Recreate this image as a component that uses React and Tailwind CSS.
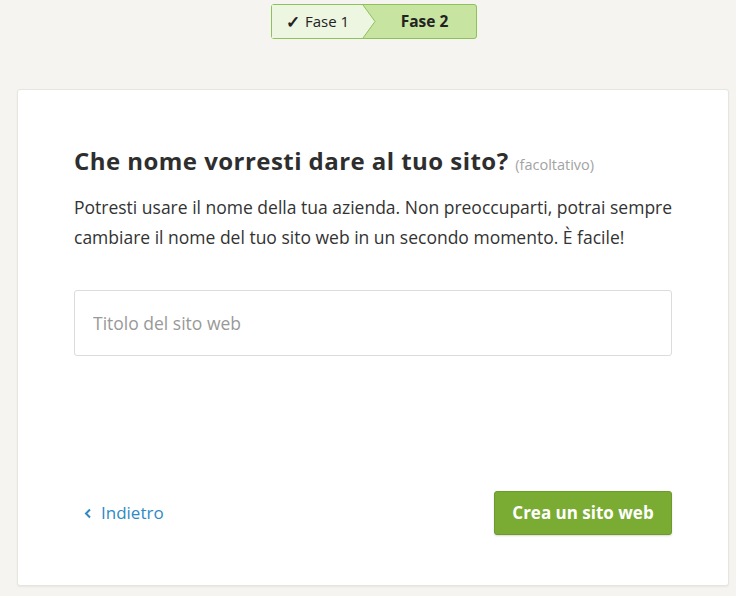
import React, { useState } from "react";

function Stepper() {
  return (
    <div className="relative flex h-[35px] w-[206px] rounded-[3px] border border-[#8dc159] bg-[#c8e4a1] text-[15px] text-[#222]">
      {/* Fase 1 segment with chevron */}
      <svg
        className="absolute left-0 top-0 h-[33px] w-[104px]"
        viewBox="0 0 104 33"
        preserveAspectRatio="none"
      >
        <path d="M0 0 H91 L103 16.5 L91 33 H0 Z" fill="#edf6e1" />
        <path d="M91 0 L103 16.5 L91 33" fill="none" stroke="#8dc159" strokeWidth="1" />
      </svg>
      <div className="relative flex w-[92px] items-center justify-center gap-[5px]">
        <span className="font-bold text-[17px] leading-none">✓</span>
        <span>Fase 1</span>
      </div>
      <div className="relative flex flex-1 items-center justify-center pl-[10px] text-[15.5px] font-bold">
        Fase 2
      </div>
    </div>
  );
}

export default function App() {
  const [title, setTitle] = useState("");

  return (
    <div
      className="min-h-[596px] bg-[#f5f4f0] pt-[4px]"
      style={{ fontFamily: "'Open Sans', Lato, sans-serif" }}
    >
      <div className="flex justify-center pl-[11px]">
        <Stepper />
      </div>

      {/* Card */}
      <div className="ml-[17px] mt-[50px] h-[497px] w-[712px] rounded-[3px] border border-[#e6e5e0] bg-white px-[56px] pt-[55px] shadow-[0_1px_2px_rgba(0,0,0,0.06)]">
        <h3 className="whitespace-nowrap text-[24px] font-bold leading-[32px] tracking-[0.45px] text-[#2e2e2e]">
          Che nome vorresti dare al tuo sito?{" "}
          <span className="text-[14.5px] font-normal tracking-normal text-[#a3a3a3]">(facoltativo)</span>
        </h3>
        <p className="mt-[11px] whitespace-nowrap text-[17.5px] leading-[30px] text-[#333]">
          Potresti usare il nome della tua azienda. Non preoccuparti, potrai sempre
          <br />
          cambiare il nome del tuo sito web in un secondo momento. È facile!
        </p>

        <input
          type="text"
          placeholder="Titolo del sito web"
          value={title}
          onChange={(e) => setTitle(e.target.value)}
          className="mt-[38px] h-[66px] w-full rounded-[3px] border border-[#dcdcdc] px-[18px] text-[17.5px] text-[#333] placeholder:text-[#999] focus:outline-none"
        />

        {/* Footer actions */}
        <div className="mt-[135px] flex items-center justify-between">
          <a href="#" className="flex items-center gap-[9px] pl-[10px] text-[17px] text-[#2f8ac4]">
            <svg width="8" height="11" viewBox="0 0 8 11">
              <path d="M6 1.5 L2 5.5 L6 9.5" fill="none" stroke="#2f8ac4" strokeWidth="2" />
            </svg>
            Indietro
          </a>
          <button className="h-[44px] w-[178px] rounded-[3px] border border-[#6c9a2c] bg-[#7aac33] text-[17px] font-bold text-white shadow-[0_1px_2px_rgba(0,0,0,0.15)]">
            Crea un sito web
          </button>
        </div>
      </div>
    </div>
  );
}
